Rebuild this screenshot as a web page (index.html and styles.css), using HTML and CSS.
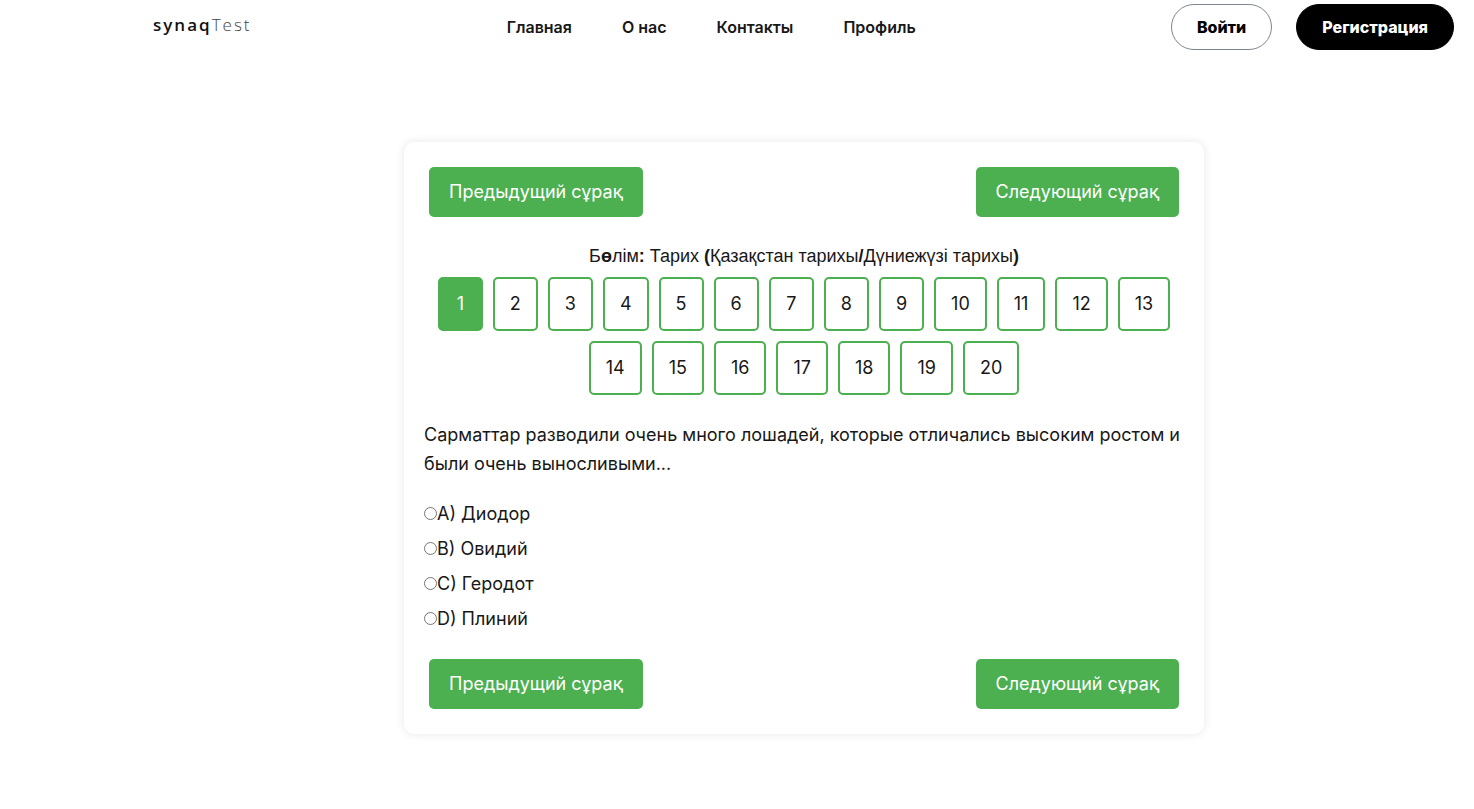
FILE: index.html
```html
<!DOCTYPE html>
<html lang="ru">
<head>
<meta charset="utf-8">
<meta name="viewport" content="width=device-width, initial-scale=1">
<title>synaqTest</title>
<link rel="stylesheet" href="styles.css">
</head>
<body>
<header class="header">
  <a class="logo" href="#"><span class="logo-strong">synaq</span><span class="logo-light">Test</span></a>
  <nav class="nav">
    <a href="#">Главная</a>
    <a href="#">О нас</a>
    <a href="#">Контакты</a>
    <a href="#">Профиль</a>
  </nav>
  <div class="actions">
    <button class="pill" type="button">Войти</button>
    <button class="pill pill-dark" type="button">Регистрация</button>
  </div>
</header>
<main class="main">
  <form class="card">
    <div class="steps">
      <button class="step" type="button">Предыдущий сұрақ</button>
      <button class="step" type="button">Следующий сұрақ</button>
    </div>
    <h2 class="section-title">Б<b>ө</b>лім<b>:</b> Тарих <b>(</b>Қазақстан тарихы<b>/</b>Дүниежүзі тарихы<b>)</b></h2>
    <div class="numbers">
      <button class="number current" type="button">1</button>
      <button class="number" type="button">2</button>
      <button class="number" type="button">3</button>
      <button class="number" type="button">4</button>
      <button class="number" type="button">5</button>
      <button class="number" type="button">6</button>
      <button class="number" type="button">7</button>
      <button class="number" type="button">8</button>
      <button class="number" type="button">9</button>
      <button class="number" type="button">10</button>
      <button class="number" type="button">11</button>
      <button class="number" type="button">12</button>
      <button class="number" type="button">13</button>
      <button class="number" type="button">14</button>
      <button class="number" type="button">15</button>
      <button class="number" type="button">16</button>
      <button class="number" type="button">17</button>
      <button class="number" type="button">18</button>
      <button class="number" type="button">19</button>
      <button class="number" type="button">20</button>
    </div>
    <p class="question">Сарматтар разводили очень много лошадей, которые отличались высоким ростом и были очень выносливыми...</p>
    <div class="answers">
      <label class="answer"><input type="radio" name="answer">A) Диодор</label>
      <label class="answer"><input type="radio" name="answer">B) Овидий</label>
      <label class="answer"><input type="radio" name="answer">C) Геродот</label>
      <label class="answer"><input type="radio" name="answer">D) Плиний</label>
    </div>
    <div class="steps">
      <button class="step" type="button">Предыдущий сұрақ</button>
      <button class="step" type="button">Следующий сұрақ</button>
    </div>
  </form>
</main>
</body>
</html>
```

FILE: styles.css
```css
* {
  box-sizing: border-box;
}

body {
  margin: 0;
  background: #fff;
  color: #181818;
  font-family: Inter, "Noto Sans", sans-serif;
  font-size: 18px;
  line-height: 29px;
}

button {
  font: inherit;
  cursor: pointer;
}

.header {
  display: flex;
  justify-content: space-between;
  align-items: center;
  padding: 4px 20px 4px 153px;
}

.logo {
  padding-bottom: 5px;
  color: #111;
  font-size: 17px;
  font-family: "Open Sans", "Noto Sans", sans-serif;
  letter-spacing: 2px;
  text-decoration: none;
}

.logo-strong {
  font-weight: 600;
}

.logo-light {
  color: #444;
  font-weight: 300;
}

.nav {
  display: flex;
  gap: 50px;
}

.nav a {
  color: #181818;
  font-size: 16px;
  font-weight: 600;
  text-decoration: none;
}

.actions {
  display: flex;
  gap: 24px;
}

.pill {
  padding: 10px 25px;
  border: 1px solid #7d8590;
  border-radius: 24px;
  background: #fff;
  color: #000;
  font-size: 16px;
  font-weight: 800;
  line-height: 24px;
}

.pill-dark {
  border-color: #000;
  background: #000;
  color: #fff;
}

.main {
  padding: 88px 0 75px 134px;
}

.card {
  max-width: 800px;
  margin: 0 auto;
  padding: 20px;
  border-radius: 10px;
  background: #fff;
  box-shadow: 0 0 10px rgba(0, 0, 0, 0.1);
}

.steps {
  display: flex;
  justify-content: space-between;
  padding: 5px;
}

.step {
  padding: 10px 20px;
  border: 0;
  border-radius: 5px;
  background: #4caf50;
  color: #fff;
  line-height: 30px;
}

.section-title {
  margin: 20px 0 6px;
  font-family: "Liberation Sans", Arial, sans-serif;
  font-size: 18px;
  font-weight: 400;
  text-align: center;
}

.numbers {
  display: flex;
  flex-wrap: wrap;
  justify-content: center;
  gap: 10px;
}

.number {
  min-width: 45px;
  padding: 10px 15px;
  border: 2px solid #4caf50;
  border-radius: 5px;
  background: #fff;
  color: #181818;
  line-height: 30px;
}

.current {
  background: #4caf50;
  color: #fff;
}

.question {
  margin: 25px 0 21px;
}

.answers {
  display: flex;
  flex-direction: column;
  gap: 6px;
  margin-bottom: 21px;
}

.answer {
  display: flex;
  align-items: center;
}

.answer input {
  width: 13px;
  height: 13px;
  margin: 0;
}
```
